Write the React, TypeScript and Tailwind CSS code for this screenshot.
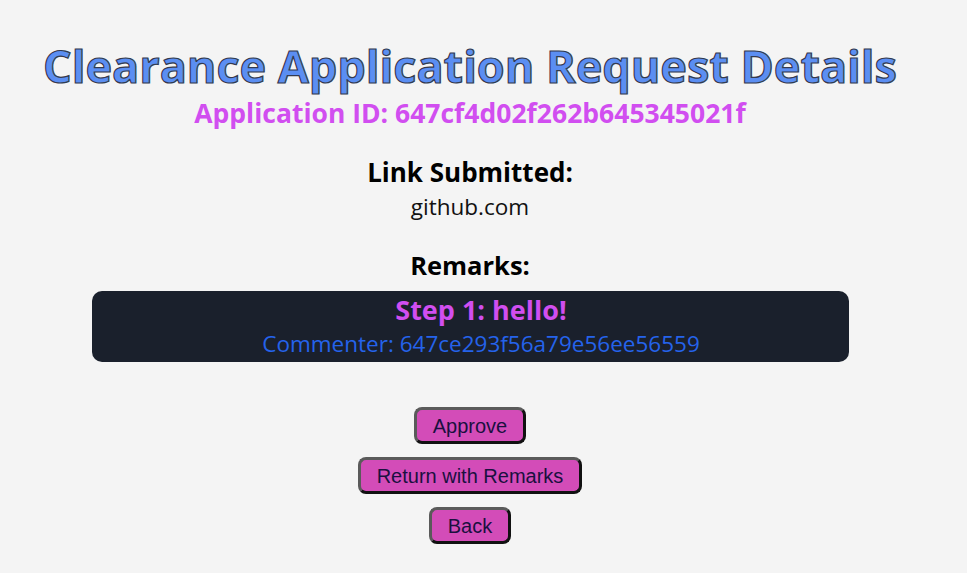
import React from 'react';

const buttons = ['Approve', 'Return with Remarks', 'Back'];

const App: React.FC = () => {
    return (
        <div className="min-h-[573px] bg-[#f4f4f4] font-['Open_Sans',sans-serif]">
            <div className="w-[940px] flex flex-col items-center pt-[38px]">
                <h1 className="text-[45px] leading-[56px] font-bold text-[#5b8ef2] [-webkit-text-stroke:1.2px_#333a4f]">
                    Clearance Application Request Details
                </h1>
                <h2 className="mt-[3px] text-[26.5px] leading-[32px] font-bold text-[#d14ef0]">
                    Application ID: 647cf4d02f262b645345021f
                </h2>
                <h3 className="mt-[27px] text-[26px] leading-[32px] font-bold text-black">Link Submitted:</h3>
                <p className="mt-[4px] text-[22.5px] leading-[30px] text-[#111]">github.com</p>
                <h3 className="mt-[27px] text-[25.5px] leading-[32px] font-bold text-black">Remarks:</h3>
                <div className="mt-[10px] w-[757px] h-[71px] rounded-[10px] bg-[#1a202c] flex flex-col items-center pt-[3px] pl-[22px]">
                    <div className="text-[27px] leading-[32px] font-bold text-[#d14ef0]">Step 1: hello!</div>
                    <div className="text-[22.5px] leading-[36px] text-[#2563eb]">Commenter: 647ce293f56a79e56ee56559</div>
                </div>
                <div className="mt-[45px] flex flex-col items-center gap-[13px]">
                    {buttons.map(label => (
                        <button
                            key={label}
                            className="h-[37px] px-[16px] rounded-[8px] border-[3px] border-t-[#5a5a5a] border-l-[#5a5a5a] border-b-[#111] border-r-[#111] bg-[#d34cb8] font-['Liberation_Sans',Arial,sans-serif] text-[20px] text-[#1a1040]"
                        >
                            {label}
                        </button>
                    ))}
                </div>
            </div>
        </div>
    );
};

export default App;
